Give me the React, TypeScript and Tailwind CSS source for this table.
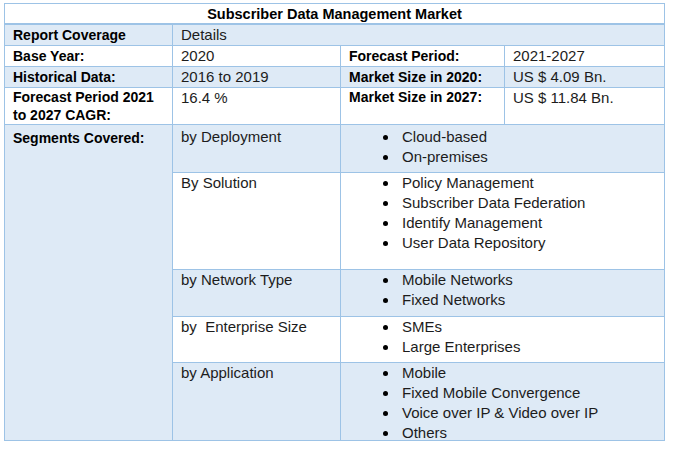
import React from "react";

const blue = "bg-[#deeaf6]";
const cell = "border-r border-b border-[#9dc3e6] px-2";
const label = "font-bold text-[14px] leading-[18px] text-black";
const body = "text-[15px] leading-[20px] text-[#1c1c1c]";

function Bullets({ items }: { items: string[] }) {
  return (
    <ul className="pl-[42px]">
      {items.map((it) => (
        <li key={it} className={`flex items-center ${body} leading-[19.7px]`}>
          <span className="w-[5px] h-[5px] rounded-full bg-black shrink-0" />
          <span className="ml-[14px]">{it}</span>
        </li>
      ))}
    </ul>
  );
}

const segments = [
  { name: "by Deployment", items: ["Cloud-based", "On-premises"], bg: blue, pad: "pt-[2px]" },
  {
    name: "By Solution",
    items: ["Policy Management", "Subscriber Data Federation", "Identify Management", "User Data Repository"],
    bg: "bg-white",
    pad: "",
  },
  { name: "by Network Type", items: ["Mobile Networks", "Fixed Networks"], bg: blue, pad: "" },
  { name: "by\u00a0 Enterprise Size", items: ["SMEs", "Large Enterprises"], bg: "bg-white", pad: "" },
  {
    name: "by Application",
    items: ["Mobile", "Fixed Mobile Convergence", "Voice over IP & Video over IP", "Others"],
    bg: blue,
    pad: "",
  },
];

export default function App() {
  return (
    <div className="w-[674px] h-[450px] bg-white font-['Liberation_Sans',Arial,sans-serif]">
      <div className="ml-[4px] pt-[3px]">
        <div className="grid w-[661px] grid-cols-[168px_168px_164px_160px] grid-rows-[21px_21px_21px_21px_37px_48px_97px_47px_46px_78px] border-l border-t border-[#9dc3e6]">
          {/* Title */}
          <div className="col-span-4 border-r border-b-2 border-[#9dc3e6] flex items-center justify-center">
            <span className="font-bold text-[14.5px] leading-[18px] text-black">
              Subscriber Data Management Market
            </span>
          </div>

          {/* Report coverage */}
          <div className={`${cell} ${blue} flex items-center`}>
            <span className={label}>Report Coverage</span>
          </div>
          <div className={`${cell} ${blue} col-span-3 flex items-center`}>
            <span className={body}>Details</span>
          </div>

          {/* Base year */}
          <div className={`${cell} flex items-center`}>
            <span className={label}>Base Year:</span>
          </div>
          <div className={`${cell} flex items-center`}>
            <span className={body}>2020</span>
          </div>
          <div className={`${cell} flex items-center`}>
            <span className={label}>Forecast Period:</span>
          </div>
          <div className={`${cell} flex items-center`}>
            <span className={body}>2021-2027</span>
          </div>

          {/* Historical */}
          <div className={`${cell} ${blue} flex items-center`}>
            <span className={label}>Historical Data:</span>
          </div>
          <div className={`${cell} ${blue} flex items-center`}>
            <span className={body}>2016 to 2019</span>
          </div>
          <div className={`${cell} ${blue} flex items-center`}>
            <span className={label}>Market Size in 2020:</span>
          </div>
          <div className={`${cell} ${blue} flex items-center`}>
            <span className={body}>US $ 4.09 Bn.</span>
          </div>

          {/* CAGR */}
          <div className={cell}>
            <p className={label}>
              Forecast Period 2021
              <br />
              to 2027 CAGR:
            </p>
          </div>
          <div className={cell}>
            <p className={body}>16.4 %</p>
          </div>
          <div className={cell}>
            <p className={label}>Market Size in 2027:</p>
          </div>
          <div className={cell}>
            <p className={body}>US $ 11.84 Bn.</p>
          </div>

          {/* Segments */}
          <div className={`${cell} ${blue} row-span-5 pt-[4px]`}>
            <p className={label}>Segments Covered:</p>
          </div>
          {segments.map((s) => (
            <React.Fragment key={s.name}>
              <div className={`${cell} ${s.bg} ${s.pad}`}>
                <p className={`${body} whitespace-pre`}>{s.name}</p>
              </div>
              <div className={`border-r border-b border-[#9dc3e6] col-span-2 ${s.bg} ${s.pad}`}>
                <Bullets items={s.items} />
              </div>
            </React.Fragment>
          ))}
        </div>
      </div>
    </div>
  );
}
